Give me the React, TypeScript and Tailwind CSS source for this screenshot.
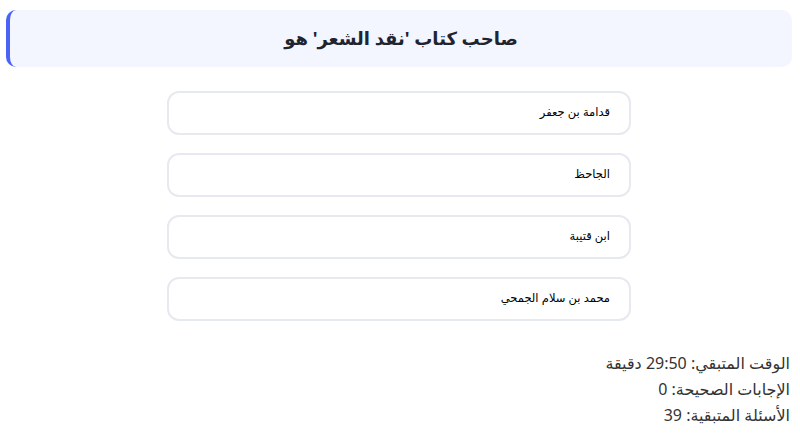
import React from "react";

const options = ["قدامة بن جعفر", "الجاحظ", "ابن قتيبة", "محمد بن سلام الجمحي"];

export default function App() {
  return (
    <div dir="rtl" className="w-[800px] h-[445px] bg-white" style={{ fontFamily: '"Noto Sans", "DejaVu Sans", sans-serif' }}>
      <div className="ml-[6px] mr-[8px] pt-[10px]">
        <div className="h-[57px] rounded-[10px] border-l-4 border-[#4a63f5] bg-[#f3f6fe] flex items-center justify-center">
          <h2 className="text-[18px] font-bold text-[#1f2430]">صاحب كتاب 'نقد الشعر' هو</h2>
        </div>
        <div className="flex flex-col items-center gap-[18px] mt-[24px]">
          {options.map((o) => (
            <div key={o} className="w-[464px] h-[44px] rounded-[12px] border-2 border-[#e6e9ef] bg-white flex items-center px-[19px] text-[11.5px] text-black" style={{ fontFamily: '"Liberation Sans", "DejaVu Sans", sans-serif' }}>
              {o}
            </div>
          ))}
        </div>
        <div className="mt-[29px] pr-[2px] text-[16px] leading-[26px] text-[#333]">
          <div>الوقت المتبقي: 29:50 دقيقة</div>
          <div>الإجابات الصحيحة: 0</div>
          <div>الأسئلة المتبقية: 39</div>
        </div>
      </div>
    </div>
  );
}
